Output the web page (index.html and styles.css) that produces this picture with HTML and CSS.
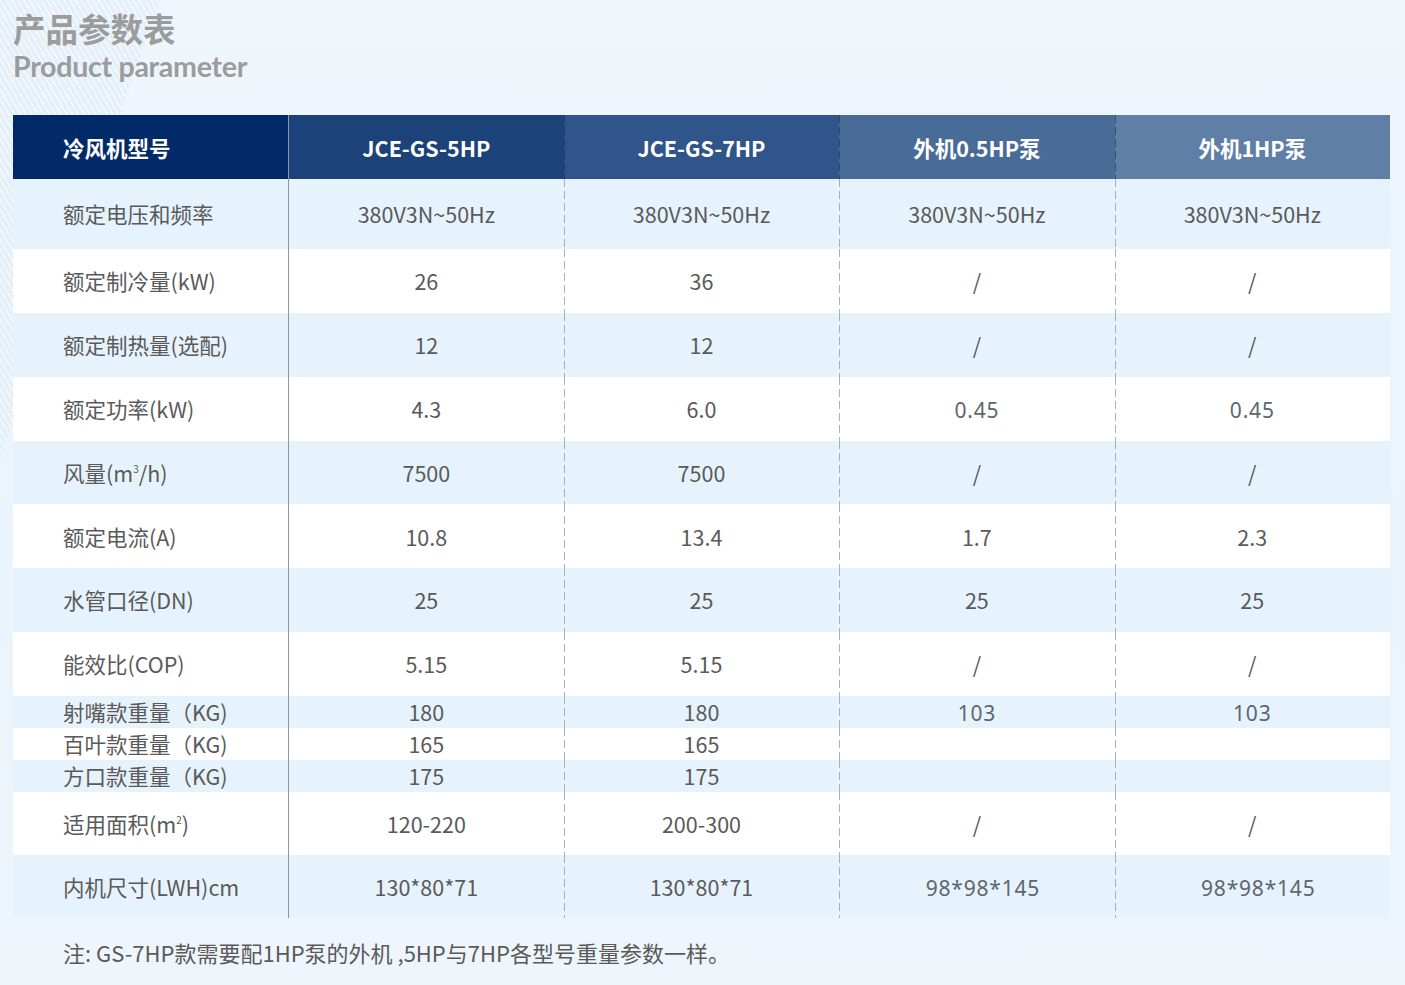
FILE: index.html
```html
<!DOCTYPE html>
<html lang="zh-CN">
<head>
<meta charset="utf-8">
<title>产品参数表</title>
<link rel="stylesheet" href="styles.css">
</head>
<body>
<div class="page">
  <div class="deco"></div>
  <header class="title">
    <h1>产品参数表</h1>
    <h2>Product parameter</h2>
  </header>
  <table class="spec">
    <colgroup>
      <col class="c"><col class="c"><col class="c"><col class="c"><col class="c">
    </colgroup>
    <thead>
      <tr>
        <th class="h1 label">冷风机型号</th>
        <th class="h2 solid">JCE-GS-5HP</th>
        <th class="h3 dash">JCE-GS-7HP</th>
        <th class="h4 dash">外机0.5HP泵</th>
        <th class="h5 dash">外机1HP泵</th>
      </tr>
    </thead>
    <tbody>
      <tr class="light first">
        <td class="label">额定电压和频率</td><td class="solid">380V3N~50Hz</td><td class="dash">380V3N~50Hz</td><td class="dash">380V3N~50Hz</td><td class="dash">380V3N~50Hz</td>
      </tr>
      <tr class="white">
        <td class="label">额定制冷量(kW)</td><td class="solid">26</td><td class="dash">36</td><td class="dash">/</td><td class="dash">/</td>
      </tr>
      <tr class="light">
        <td class="label">额定制热量(选配)</td><td class="solid">12</td><td class="dash">12</td><td class="dash">/</td><td class="dash">/</td>
      </tr>
      <tr class="white">
        <td class="label">额定功率(kW)</td><td class="solid">4.3</td><td class="dash">6.0</td><td class="dash alt">0.45</td><td class="dash alt">0.45</td>
      </tr>
      <tr class="light">
        <td class="label">风量(m<sup>3</sup>/h)</td><td class="solid">7500</td><td class="dash">7500</td><td class="dash">/</td><td class="dash">/</td>
      </tr>
      <tr class="white">
        <td class="label">额定电流(A)</td><td class="solid">10.8</td><td class="dash">13.4</td><td class="dash">1.7</td><td class="dash">2.3</td>
      </tr>
      <tr class="light">
        <td class="label">水管口径(DN)</td><td class="solid">25</td><td class="dash">25</td><td class="dash">25</td><td class="dash">25</td>
      </tr>
      <tr class="white">
        <td class="label">能效比(COP)</td><td class="solid">5.15</td><td class="dash">5.15</td><td class="dash">/</td><td class="dash">/</td>
      </tr>
      <tr class="light thin">
        <td class="label">射嘴款重量（KG)</td><td class="solid">180</td><td class="dash">180</td><td class="dash alt">103</td><td class="dash alt">103</td>
      </tr>
      <tr class="white thin">
        <td class="label">百叶款重量（KG)</td><td class="solid">165</td><td class="dash">165</td><td class="dash"></td><td class="dash"></td>
      </tr>
      <tr class="light thin">
        <td class="label">方口款重量（KG)</td><td class="solid">175</td><td class="dash">175</td><td class="dash"></td><td class="dash"></td>
      </tr>
      <tr class="white last">
        <td class="label">适用面积(m<sup>2</sup>)</td><td class="solid">120-220</td><td class="dash">200-300</td><td class="dash">/</td><td class="dash">/</td>
      </tr>
      <tr class="light last">
        <td class="label">内机尺寸(LWH)cm</td><td class="solid">130*80*71</td><td class="dash">130*80*71</td><td class="dash alt shift">98*98*145</td><td class="dash alt shift">98*98*145</td>
      </tr>
    </tbody>
  </table>
  <p class="note">注: GS-7HP款需要配1HP泵的外机 ,5HP与7HP各型号重量参数一样。</p>
</div>
</body>
</html>
```

FILE: styles.css
```css
html, body {
  margin: 0;
  padding: 0;
}
body {
  width: 1405px;
  height: 985px;
  overflow: hidden;
  background: linear-gradient(180deg, #eff6fc 0%, #eaf4fc 60%, #eef6fc 100%);
  font-family: "Noto Sans CJK SC", "Noto Sans", sans-serif;
  color: #585858;
}
.page {
  position: relative;
  padding: 0 15px 0 13px;
  height: 985px;
  box-sizing: border-box;
}
.deco {
  position: absolute;
  left: 0;
  top: 0;
  width: 170px;
  height: 480px;
  clip-path: polygon(0 0, 160px 0, 0 460px);
  background:
    linear-gradient(109deg, transparent 0, transparent calc(100% - 2px), rgba(255,255,255,0.9) calc(100% - 2px)),
    repeating-linear-gradient(60deg, rgba(255,255,255,0.75) 0 1px, rgba(222,236,248,0.6) 1px 5px);
  pointer-events: none;
}
.title {
  position: relative;
  padding-top: 8px;
  height: 107px;
  box-sizing: border-box;
}
.title h1 {
  margin: 0;
  font-size: 32.5px;
  line-height: 40px;
  font-weight: 700;
  color: #9c9c9c;
}
.title h2 {
  margin: 0;
  font-family: "Lato", "Noto Sans", sans-serif;
  font-size: 28.6px;
  line-height: 36px;
  font-weight: 700;
  color: #9c9c9c;
  letter-spacing: -0.3px;
}
.spec {
  position: relative;
  border-collapse: collapse;
  table-layout: fixed;
  width: 1377px;
  margin-top: 8px;
}
.spec col.c {
  width: 275.4px;
}
.spec th {
  height: 64px;
  padding: 0;
  color: #ffffff;
  font-size: 21.5px;
  font-weight: 700;
  text-align: center;
}
.spec th.label {
  text-align: left;
  padding-left: 50px;
}
.h1 { background-color: #022a68; }
.h2 { background-color: #1b4279; }
.h3 { background-color: #2f558b; }
.h4 { background-color: #486b98; }
.h5 { background-color: #607fa6; }
.spec td {
  height: 63.85px;
  padding: 0;
  text-align: center;
  font-size: 21.5px;
  color: #5a5a5a;
  line-height: 1;
}
.spec td.label {
  text-align: left;
  padding-left: 50px;
}
.spec tr.first td {
  height: 70px;
}
.spec tr.thin td {
  height: 32px;
}
.spec tr.last td {
  height: 63px;
}
.spec td.alt {
  font-family: "Noto Sans", sans-serif;
  font-size: 21px;
  color: #5e6670;
  letter-spacing: 0.8px;
  padding-top: 4px;
  box-sizing: border-box;
}
.spec td.alt.shift {
  padding-left: 12px;
}
.light td { background-color: #e6f3fc; }
.white td { background-color: #ffffff; }
.spec .solid {
  border-left: 1.5px solid #8f969c;
}
.spec td.dash,
.spec th.dash {
  background-image: repeating-linear-gradient(180deg, #a9b0b6 0 8px, transparent 8px 12px);
  background-size: 1px 100%;
  background-repeat: no-repeat;
  background-position: left top;
}
.spec th.dash {
  background-image: repeating-linear-gradient(180deg, rgba(30,40,60,0.55) 0 8px, transparent 8px 12px);
}
sup {
  font-size: 10px;
  vertical-align: 9px;
  line-height: 0;
}
.note {
  margin: 18px 0 0 50px;
  font-size: 22px;
  color: #5a5a5a;
}
```
